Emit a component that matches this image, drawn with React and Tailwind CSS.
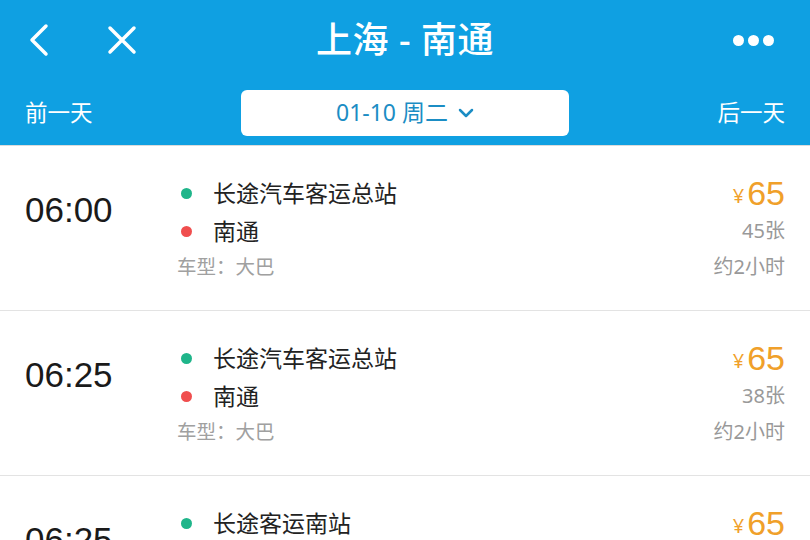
import React from "react";

const font = { fontFamily: '"Noto Sans", "Noto Sans CJK SC", sans-serif' };

const rows = [
  { time: "06:00", from: "长途汽车客运总站", to: "南通", seats: "45张" },
  { time: "06:25", from: "长途汽车客运总站", to: "南通", seats: "38张" },
  { time: "06:25", from: "长途客运南站", to: "南通", seats: "40张" },
];

function Row({ r }) {
  return (
    <div className="h-[165px] border-b border-[#e3e3e3] flex bg-white shrink-0">
      <div className="w-[177px] pl-[25px] pt-[43px]">
        <div className="text-[35px] leading-[42px] text-[#1a1a1a]" style={{ fontFamily: '"Liberation Sans", "Noto Sans CJK SC", sans-serif' }}>
          {r.time}
        </div>
      </div>
      <div className="flex-1 pt-[28px]">
        <div className="h-[38px] flex items-center">
          <span className="w-[11px] h-[11px] rounded-full bg-[#1fb58a] ml-[4px] mr-[21px]" />
          <span className="text-[23px] text-[#222]">{r.from}</span>
        </div>
        <div className="h-[38px] flex items-center">
          <span className="w-[11px] h-[11px] rounded-full bg-[#f04e4e] ml-[4px] mr-[21px]" />
          <span className="text-[23px] text-[#222]">{r.to}</span>
        </div>
        <div className="h-[34px] flex items-center text-[19.5px] text-[#a0a0a0]">车型：大巴</div>
      </div>
      <div className="pr-[25px] pt-[28px] flex flex-col items-end">
        <div className="h-[38px] flex items-center text-[#f0a02a]">
          <span className="text-[20px] mr-[3px] mt-[6px]">¥</span>
          <span className="text-[34px] leading-[38px]" style={{ fontFamily: '"Liberation Sans", sans-serif' }}>65</span>
        </div>
        <div className="h-[38px] flex items-center text-[20px] text-[#999]">{r.seats}</div>
        <div className="h-[34px] flex items-center text-[20px] text-[#999]">约2小时</div>
      </div>
    </div>
  );
}

export default function App() {
  return (
    <div className="w-[810px] h-[540px] overflow-hidden bg-white flex flex-col" style={font}>
      <div className="bg-[#0fa0e2] h-[145px] shrink-0 flex flex-col">
        <div className="h-[80px] grid grid-cols-[1fr_auto_1fr] items-center">
          <div className="flex items-center pl-[26px] gap-[52px]">
            <svg width="28" height="34" viewBox="0 0 28 34">
              <path d="M20 3 L6 17 L20 31" fill="none" stroke="white" strokeWidth="3.5" strokeLinecap="round" strokeLinejoin="round" />
            </svg>
            <svg width="32" height="32" viewBox="0 0 32 32">
              <path d="M4 4 L28 28 M28 4 L4 28" fill="none" stroke="white" strokeWidth="3.5" strokeLinecap="round" />
            </svg>
          </div>
          <div className="text-white text-[36px] font-medium tracking-[0.5px] leading-[42px]">上海 - 南通</div>
          <div className="flex justify-end pr-[36px] gap-[4px]">
            <span className="w-[11px] h-[11px] rounded-full bg-white" />
            <span className="w-[11px] h-[11px] rounded-full bg-white" />
            <span className="w-[11px] h-[11px] rounded-full bg-white" />
          </div>
        </div>
        <div className="h-[65px] flex items-center justify-between px-[25px]">
          <span className="text-white text-[22.5px]">前一天</span>
          <div className="w-[328px] h-[46px] bg-white rounded-[6px] flex items-center justify-center gap-[10px] text-[#1b8dc4] text-[23px]">
            <span>01-10 周二</span>
            <svg width="16" height="12" viewBox="0 0 16 12">
              <path d="M2 3 L8 9 L14 3" fill="none" stroke="#1b8dc4" strokeWidth="2.5" strokeLinecap="round" strokeLinejoin="round" />
            </svg>
          </div>
          <span className="text-white text-[22.5px]">后一天</span>
        </div>
      </div>
      <div className="h-[1px] bg-[#dcdcdc] shrink-0" />
      {rows.map((r, i) => (
        <Row key={i} r={r} />
      ))}
    </div>
  );
}
